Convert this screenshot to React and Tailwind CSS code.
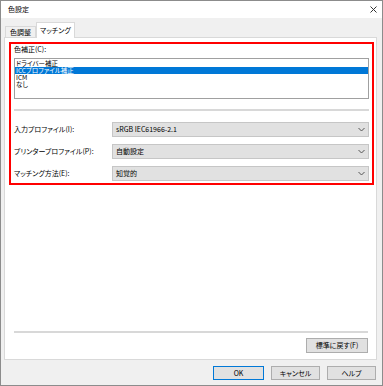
import React from "react";

const rows = [
  { label: "入力プロファイル(I):", value: "sRGB IEC61966-2.1" },
  { label: "プリンタープロファイル(P):", value: "自動設定" },
  { label: "マッチング方法(E):", value: "知覚的" },
];

const items = ["ドライバー補正", "ICCプロファイル補正", "ICM", "なし"];

function Chevron() {
  return (
    <svg width="7" height="5" viewBox="0 0 7 5" className="shrink-0">
      <polyline points="0.5,1 3.5,4 6.5,1" fill="none" stroke="#555" strokeWidth="1" />
    </svg>
  );
}

function Combo({ value }) {
  return (
    <div className="w-[257px] h-[15px] bg-[#e1e1e1] border border-[#c6c6c6] flex items-center justify-between pl-[3px] pr-[3px]">
      <span>{value}</span>
      <Chevron />
    </div>
  );
}

export default function App() {
  return (
    <div className="w-[383px] h-[386px] border border-[#8c8c8c] bg-[#f0f0f0] flex flex-col text-[7px] leading-[9px] text-black font-['Noto_Sans_CJK_JP','Noto_Sans',sans-serif] [font-feature-settings:'palt']">
      <div className="h-[17px] shrink-0 bg-white flex items-center justify-between pl-[7px] pr-[5px]">
        <span className="text-[7px]">色設定</span>
        <svg width="7" height="7" viewBox="0 0 7 7">
          <path d="M0.5 0.5 L6.5 6.5 M6.5 0.5 L0.5 6.5" stroke="#333" strokeWidth="1" />
        </svg>
      </div>

      <div className="flex-1 flex flex-col pl-[3px] pr-[5px] pt-[4px]">
        <div className="h-[16px] flex items-end pl-[1px] relative z-10">
          <div className="h-[11px] mb-[1px] px-[4px] border border-b-0 border-[#d9d9d9] bg-[#f0f0f0] flex items-center">
            色調整
          </div>
          <div className="h-[16px] px-[3px] border border-b-0 border-[#d9d9d9] bg-white flex items-center">
            マッチング
          </div>
        </div>

        <div className="h-[323px] -mt-[1px] border border-[#d9d9d9] bg-white flex flex-col">
          <div className="w-[365px] h-[143px] ml-[4px] mt-[4px] border-2 border-[#ff0000] flex flex-col px-[3px] pt-[1px]">
            <div className="h-[9px]">色補正(C):</div>
            <div className="h-[41px] mt-[4px] border border-[#a0a0a0] bg-white pt-[1px] flex flex-col">
              {items.map((item, i) => (
                <div
                  key={item}
                  className={`h-[7px] text-[6.5px] leading-[7px] pl-[1px] ${
                    i === 1 ? "bg-[#0078d7] text-white" : ""
                  }`}
                >
                  {item}
                </div>
              ))}
            </div>
            <div className="h-[2px] mt-[10px] bg-[#d8d8d8]" />
            <div className="mt-[11px] flex flex-col gap-[7px]">
              {rows.map((row) => (
                <div key={row.label} className="flex items-center">
                  <div className="w-[98px]">{row.label}</div>
                  <Combo value={row.value} />
                </div>
              ))}
            </div>
          </div>

          <div className="mt-auto h-[2px] ml-[9px] mr-[8px] bg-[#d8d8d8]" />
          <div className="flex justify-end pr-[8px] mt-[5px] mb-[6px]">
            <div className="w-[62px] h-[15px] bg-[#e1e1e1] border border-[#adadad] flex items-center justify-center">
              標準に戻す(F)
            </div>
          </div>
        </div>

        <div className="flex justify-end gap-[7px] pt-[6px] pr-[1px]">
          <div className="w-[51px] h-[14px] bg-[#e1e1e1] border border-[#0078d7] flex items-center justify-center">
            OK
          </div>
          <div className="w-[49px] h-[14px] bg-[#e1e1e1] border border-[#adadad] flex items-center justify-center">
            キャンセル
          </div>
          <div className="w-[49px] h-[14px] bg-[#e1e1e1] border border-[#adadad] flex items-center justify-center">
            ヘルプ
          </div>
        </div>
      </div>
    </div>
  );
}
